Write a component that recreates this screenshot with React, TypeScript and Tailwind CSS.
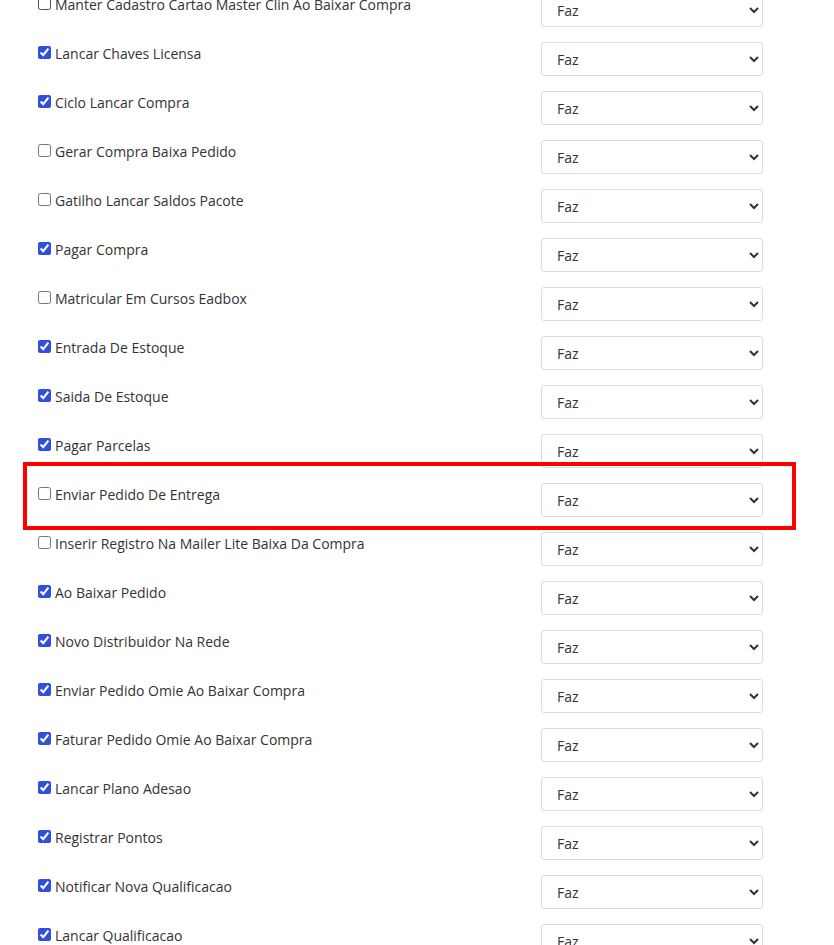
import React from 'react';

type Rule = { label: string; checked: boolean; highlight?: boolean };

const rules: Rule[] = [
  { label: 'Manter Cadastro Cartao Master Clin Ao Baixar Compra', checked: false },
  { label: 'Lancar Chaves Licensa', checked: true },
  { label: 'Ciclo Lancar Compra', checked: true },
  { label: 'Gerar Compra Baixa Pedido', checked: false },
  { label: 'Gatilho Lancar Saldos Pacote', checked: false },
  { label: 'Pagar Compra', checked: true },
  { label: 'Matricular Em Cursos Eadbox', checked: false },
  { label: 'Entrada De Estoque', checked: true },
  { label: 'Saida De Estoque', checked: true },
  { label: 'Pagar Parcelas', checked: true },
  { label: 'Enviar Pedido De Entrega', checked: false, highlight: true },
  { label: 'Inserir Registro Na Mailer Lite Baixa Da Compra', checked: false },
  { label: 'Ao Baixar Pedido', checked: true },
  { label: 'Novo Distribuidor Na Rede', checked: true },
  { label: 'Enviar Pedido Omie Ao Baixar Compra', checked: true },
  { label: 'Faturar Pedido Omie Ao Baixar Compra', checked: true },
  { label: 'Lancar Plano Adesao', checked: true },
  { label: 'Registrar Pontos', checked: true },
  { label: 'Notificar Nova Qualificacao', checked: true },
  { label: 'Lancar Qualificacao', checked: true },
];

const RuleRow: React.FC<{ rule: Rule }> = ({ rule }) => {
  return (
    <div className="relative flex h-[49px] items-start">
      {/* annotation box drawn over the row */}
      {rule.highlight && (
        <div className="pointer-events-none absolute left-[23px] top-[-14px] h-[68px] w-[773px] border-[4px] border-[#ff0000]" />
      )}
      <label className="mt-[8px] flex w-[541px] items-baseline pl-[34px] text-[14px] leading-[22px] text-[#333]">
        <input
          type="checkbox"
          defaultChecked={rule.checked}
          className="m-0 ml-[4px] mr-[4px] h-[13px] w-[13px] shrink-0 accent-[#2f4fdc]"
        />
        <span>{rule.label}</span>
      </label>
      <select
        defaultValue="faz"
        className="mt-[7px] h-[34px] w-[222px] rounded-[3px] border border-[#dcdcdc] bg-white pl-[11px] text-[14px] text-[#333]"
      >
        <option value="faz">Faz</option>
        <option value="nao">Não Faz</option>
      </select>
    </div>
  );
};

export default function App() {
  return (
    <div className="min-h-screen overflow-hidden bg-white font-['Open_Sans',sans-serif]">
      <div className="mt-[-14px]">
        {rules.map((r) => (
          <RuleRow key={r.label} rule={r} />
        ))}
      </div>
    </div>
  );
}
